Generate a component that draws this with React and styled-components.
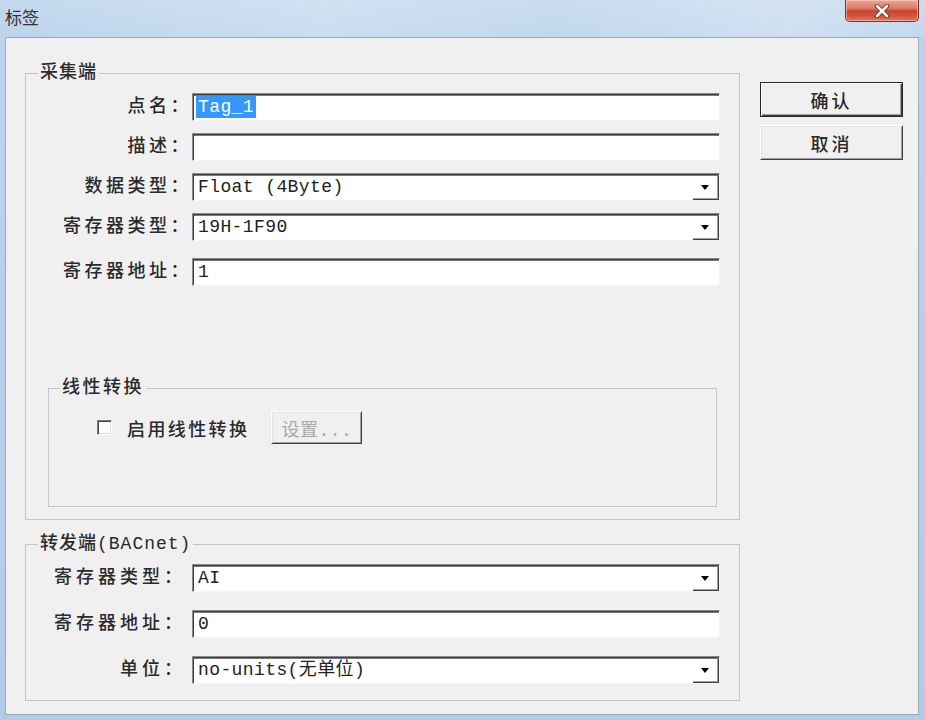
import React from "react";
import styled, { createGlobalStyle } from "styled-components";

const GlobalStyle = createGlobalStyle`
  html, body { margin: 0; padding: 0; }
  body {
    width: 925px;
    height: 720px;
    overflow: hidden;
    background: #bcd3eb;
    font-family: "Liberation Mono", "Noto Sans CJK SC", monospace;
  }
  #root { width: 925px; height: 720px; }
`;

const Window = styled.div`
  width: 925px;
  height: 720px;
  box-sizing: border-box;
  padding: 0 6px 5px 5px;
  display: flex;
  flex-direction: column;
  background: linear-gradient(180deg, #c4d9ef 0%, #bcd3ec 40px, #b2cbe7 100%);
`;

const TitleBar = styled.div`
  height: 37px;
  display: flex;
  justify-content: space-between;
  align-items: flex-start;
  margin: 0 -6px 0 -5px;
  padding: 0 6px 0 5px;
  background: linear-gradient(
    90deg,
    rgba(255, 255, 255, 0) 0%,
    rgba(255, 255, 255, 0.22) 35%,
    rgba(255, 255, 255, 0.08) 60%,
    rgba(255, 255, 255, 0.28) 85%,
    rgba(255, 255, 255, 0.1) 100%
  );
`;

const Title = styled.span`
  font-family: "Noto Sans CJK SC", sans-serif;
  font-size: 17px;
  line-height: 34px;
  color: #333;
`;

const CloseButton = styled.div`
  width: 74px;
  height: 22px;
  box-sizing: border-box;
  border: 1px solid #8a2e22;
  border-top: none;
  border-radius: 0 0 5px 5px;
  background: linear-gradient(180deg, #e9a898 0%, #dc7a66 40%, #c8432f 52%, #d45a42 80%, #e07a5e 100%);
  display: flex;
  align-items: center;
  justify-content: center;
  box-shadow: inset 0 0 0 1px rgba(255, 220, 210, 0.5);
`;

const Client = styled.div`
  flex: 1;
  box-sizing: border-box;
  background: #f0f0f0;
  border: 1px solid #9aaabb;
  padding: 25px 0 0 19px;
  display: flex;
  align-items: flex-start;
  gap: 20px;
`;

const MainColumn = styled.div`
  width: 715px;
  display: flex;
  flex-direction: column;
  gap: 14px;
`;

const Group = styled.fieldset`
  margin: 0;
  min-width: 0;
  box-sizing: border-box;
  border: 1px solid #c4c4c4;
  padding: ${(p) => p.$padding};
  ${(p) => (p.$height ? `height: ${p.$height}px;` : "")}
  ${(p) => (p.$margin ? `margin: ${p.$margin};` : "")}
`;

const Legend = styled.legend`
  margin-left: ${(p) => p.$ml}px;
  padding: 0 2px;
  font-size: 18px;
  font-weight: 500;
  line-height: 20px;
  letter-spacing: ${(p) => p.$ls}px;
  color: #2a2a2a;
  background: #f0f0f0;
`;

const Rows = styled.div`
  display: flex;
  flex-direction: column;
  gap: ${(p) => p.$gap}px;
`;

const Row = styled.div`
  display: grid;
  grid-template-columns: 166px 528px;
  align-items: center;
  height: 28px;
  ${(p) => (p.$extra ? `margin-top: ${p.$extra}px;` : "")}
`;

const Label = styled.span`
  text-align: right;
  font-size: 18px;
  font-weight: 500;
  line-height: 28px;
  letter-spacing: ${(p) => p.$ls}px;
  padding-right: ${(p) => p.$pr || 0}px;
  color: #2a2a2a;
  white-space: nowrap;
`;

const Field = styled.div`
  height: 28px;
  box-sizing: border-box;
  background: #fff;
  border-style: solid;
  border-width: 1px;
  border-color: #8a8a8a #f4f4f4 #f4f4f4 #8a8a8a;
  box-shadow: inset 1px 1px 0 #3f3f3f, inset 0 2px 0 #7a7a7a;
  display: flex;
  align-items: stretch;
  padding-left: 3px;
`;

const Value = styled.div`
  flex: 1;
  display: flex;
  align-items: center;
  font-size: 18px;
  letter-spacing: 0.4px;
  color: #222;
  white-space: nowrap;
`;

const ValueText = styled.span`
  padding: 0 2px;
  line-height: 22px;
  background: ${(p) => (p.$selected ? "#3399ff" : "transparent")};
  color: ${(p) => (p.$selected ? "#fff" : "#222")};
`;

const DropButton = styled.div`
  width: 26px;
  box-sizing: border-box;
  border-right: 1px solid #404040;
  border-bottom: 1px solid #404040;
  box-shadow: inset -1px -1px 0 #a0a0a0;
  background: #fff;
  display: flex;
  align-items: center;
  justify-content: center;
  margin-top: 2px;
`;

const Arrow = styled.span`
  width: 0;
  height: 0;
  border-left: 4px solid transparent;
  border-right: 4px solid transparent;
  border-top: 5px solid #000;
  margin-left: -2px;
`;

const CheckRow = styled.div`
  display: flex;
  align-items: center;
  padding-left: 48px;
  height: 33px;
`;

const CheckBox = styled.span`
  width: 15px;
  height: 15px;
  box-sizing: border-box;
  background: #fff;
  border-style: solid;
  border-width: 1px;
  border-color: #808080 #fff #fff #808080;
  box-shadow: inset 1px 1px 0 #404040, inset -1px -1px 0 #dcdcdc;
  margin-right: 15px;
`;

const CheckText = styled.span`
  font-size: 18px;
  font-weight: 500;
  letter-spacing: 2.4px;
  color: #2a2a2a;
  margin-right: 22px;
`;

const Btn = styled.div`
  width: ${(p) => p.$w}px;
  height: ${(p) => p.$h}px;
  box-sizing: border-box;
  background: #f0f0f0;
  border-style: solid;
  border-width: 1px;
  border-color: ${(p) => (p.$default ? "#262626" : "#ffffff #404040 #404040 #ffffff")};
  box-shadow: ${(p) =>
    p.$default
      ? "inset 1px 1px 0 #fff, inset -1px -1px 0 #404040, inset -2px -2px 0 #a0a0a0"
      : "inset 1px 1px 0 #e3e3e3, inset -1px -1px 0 #a0a0a0"};
  display: flex;
  align-items: center;
  justify-content: center;
  font-size: 18px;
  font-weight: ${(p) => (p.$disabled ? 400 : 500)};
  letter-spacing: ${(p) => p.$ls}px;
  color: ${(p) => (p.$disabled ? "#a8a8a8" : "#2a2a2a")};
`;

const ButtonColumn = styled.div`
  margin-top: 19px;
  display: flex;
  flex-direction: column;
  gap: 8px;
`;

const XIcon = () => (
  <svg width="16" height="14" viewBox="0 0 16 14">
    <path d="M3 2 L13 12 M13 2 L3 12" stroke="#7a2a20" strokeWidth="4.5" strokeLinecap="round" />
    <path d="M3 2 L13 12 M13 2 L3 12" stroke="#ffffff" strokeWidth="2.6" strokeLinecap="round" />
  </svg>
);

const TextField = ({ value, selected }) => (
  <Field>
    <Value>
      <ValueText $selected={selected}>{value}</ValueText>
    </Value>
  </Field>
);

const Combo = ({ value }) => (
  <Field>
    <Value>
      <ValueText>{value}</ValueText>
    </Value>
    <DropButton>
      <Arrow />
    </DropButton>
  </Field>
);

export default function App() {
  return (
    <>
      <GlobalStyle />
      <Window>
        <TitleBar>
          <Title>标签</Title>
          <CloseButton>
            <XIcon />
          </CloseButton>
        </TitleBar>
        <Client>
          <MainColumn>
            <Group $padding="10px 0 12px 0">
              <Legend $ml={12} $ls={1}>采集端</Legend>
              <Rows $gap={12}>
                <Row>
                  <Label $ls={3.5}>点名：</Label>
                  <TextField value="Tag_1" selected />
                </Row>
                <Row>
                  <Label $ls={3.5}>描述：</Label>
                  <TextField value="" />
                </Row>
                <Row>
                  <Label $ls={3.5}>数据类型：</Label>
                  <Combo value="Float (4Byte)" />
                </Row>
                <Row>
                  <Label $ls={3.5}>寄存器类型：</Label>
                  <Combo value="19H-1F90" />
                </Row>
                <Row $extra={5}>
                  <Label $ls={3.5}>寄存器地址：</Label>
                  <TextField value="1" />
                </Row>
              </Rows>
              <Group $padding="13px 0 0 0" $height={129} $margin="92px 22px 0 22px">
                <Legend $ml={11} $ls={2.5}>线性转换</Legend>
                <CheckRow>
                  <CheckBox />
                  <CheckText>启用线性转换</CheckText>
                  <Btn $w={91} $h={33} $ls={0.5} $disabled>设置...</Btn>
                </CheckRow>
              </Group>
            </Group>
            <Group $padding="10px 0 16px 0">
              <Legend $ml={12} $ls={1}>转发端(BACnet)</Legend>
              <Rows $gap={18}>
                <Row>
                  <Label $ls={4} $pr={6}>寄存器类型：</Label>
                  <Combo value="AI" />
                </Row>
                <Row>
                  <Label $ls={4} $pr={6}>寄存器地址：</Label>
                  <TextField value="0" />
                </Row>
                <Row>
                  <Label $ls={4} $pr={6}>单位：</Label>
                  <Combo value="no-units(无单位)" />
                </Row>
              </Rows>
            </Group>
          </MainColumn>
          <ButtonColumn>
            <Btn $w={143} $h={35} $ls={3} $default>确认</Btn>
            <Btn $w={143} $h={35} $ls={3}>取消</Btn>
          </ButtonColumn>
        </Client>
      </Window>
    </>
  );
}
